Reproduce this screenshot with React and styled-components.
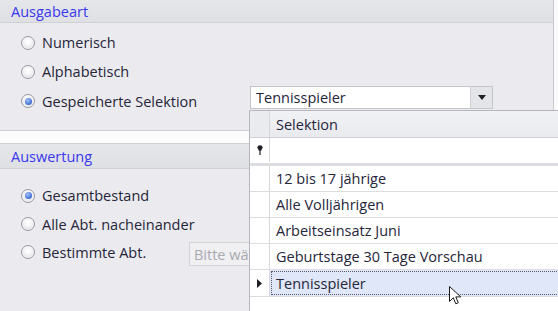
import React from 'react';
import styled, { createGlobalStyle } from 'styled-components';

const GlobalStyle = createGlobalStyle`
    html, body {
        margin: 0;
        padding: 0;
        background: #fafafb;
    }
    body {
        font-family: 'Open Sans', 'Noto Sans', sans-serif;
        font-size: 14px;
        color: #26263a;
    }
`;

const Screen = styled.div`
    position: relative;
    width: 558px;
    height: 311px;
    overflow: hidden;
    background: #fafafb;
    display: flex;
    flex-direction: column;
`;

const Group = styled.div`
    width: 554px;
    height: ${props => props.height}px;
    background: #ebebef;
    border-right: 1px solid #c9c9cd;
    box-sizing: border-box;
    display: flex;
    flex-direction: column;
    border-top: ${props => props.topLine ? '1px solid #cfd0d4' : 'none'};
    border-bottom: ${props => props.bottomLine ? '1px solid #cfd0d4' : 'none'};
`;

const GroupHeader = styled.div`
    height: ${props => props.height}px;
    flex-shrink: 0;
    display: flex;
    align-items: center;
    padding-left: 11px;
    background: linear-gradient(#e5e6ea, #dfe0e4);
    border-bottom: 1px solid #d0d1d5;
    box-sizing: border-box;
    color: #3a38ee;
    font-size: 14.5px;
`;

const GroupBody = styled.div`
    display: flex;
    flex-direction: column;
    padding: ${props => props.pad};
`;

const Row = styled.div`
    height: ${props => props.height}px;
    display: flex;
    align-items: center;
`;

const Option = styled.label`
    width: ${props => props.width}px;
    display: flex;
    align-items: center;
    gap: 7px;
    margin-left: 21px;
    font-size: 14.5px;
    color: #26263a;
    white-space: nowrap;
`;

const RadioCircle = styled.span`
    width: 14px;
    height: 14px;
    border-radius: 50%;
    box-sizing: border-box;
    border: 1px solid #979aa3;
    background: radial-gradient(circle at 50% 40%, #ffffff 0%, #f4f4f6 40%, #cfd1d7 100%);
    box-shadow: inset 0 0 0 1px rgba(255, 255, 255, 0.6);
    display: flex;
    align-items: center;
    justify-content: center;
    flex-shrink: 0;

    &::after {
        content: '';
        display: ${props => props.checked ? 'block' : 'none'};
        width: 7px;
        height: 7px;
        border-radius: 50%;
        background: radial-gradient(circle at 40% 35%, #a6c4f6 0%, #4676d6 60%, #2b54ad 100%);
    }
`;

const Combo = styled.div`
    align-self: flex-start;
    width: 243px;
    height: 23px;
    box-sizing: border-box;
    border: 1px solid #c4c5c9;
    background: #ffffff;
    display: flex;
    align-items: stretch;
`;

const ComboText = styled.div`
    flex: 1;
    padding-left: 5px;
    display: flex;
    align-items: center;
    font-size: 14.5px;
    color: #26263a;
`;

const ComboButton = styled.div`
    width: 21px;
    background: #e4e5e9;
    border-left: 1px solid #d2d3d7;
    display: flex;
    align-items: center;
    justify-content: center;
`;

const Placeholder = styled.div`
    align-self: flex-end;
    width: 90px;
    height: 24px;
    box-sizing: border-box;
    border: 1px solid #d3d4d8;
    background: #f0f0f3;
    padding-left: 4px;
    display: flex;
    align-items: center;
    color: #a9a9b0;
    font-size: 14.5px;
    white-space: nowrap;
    overflow: hidden;
`;

const Gap = styled.div`
    height: 12px;
    background: #fcfcfd;
`;

const Popup = styled.div`
    position: absolute;
    left: 249px;
    top: 110px;
    width: 330px;
    height: 220px;
    background: #ffffff;
    border-left: 1px solid #b6b7bc;
    border-top: 1px solid #b6b7bc;
    display: flex;
    flex-direction: column;
`;

const GridRow = styled.div`
    height: ${props => props.height}px;
    flex-shrink: 0;
    display: flex;
    box-sizing: border-box;
    border-bottom: 1px solid ${props => props.line || '#dcdde1'};
`;

const Indicator = styled.div`
    width: 20px;
    flex-shrink: 0;
    box-sizing: border-box;
    border-right: 1px solid #d6d7db;
    background: ${props => props.header ? '#eaebef' : '#ffffff'};
    display: flex;
    align-items: center;
    justify-content: center;
`;

const Cell = styled.div`
    flex: 1;
    display: flex;
    align-items: center;
    padding-left: 6px;
    font-size: 14.5px;
    color: #26263a;
    white-space: nowrap;
    background: ${props => props.header ? 'linear-gradient(#f1f2f5, #e9eaee)' : props.selected ? '#dfe7f8' : '#ffffff'};
    outline: ${props => props.selected ? '1px dotted #5a5a66' : 'none'};
    outline-offset: -2px;
`;

const Separator = styled.div`
    height: 3px;
    flex-shrink: 0;
    background: #dcdde1;
`;

const Cursor = styled.svg`
    position: absolute;
    left: 449px;
    top: 286px;
`;

const DownArrow = () => (
    <svg width="8" height="5" viewBox="0 0 8 5">
        <path d="M0 0 H8 L4 5 Z" fill="#1e1e24" />
    </svg>
);

const Pin = () => (
    <svg width="6" height="10" viewBox="0 0 6 10">
        <ellipse cx="3" cy="2.5" rx="2.6" ry="2.2" fill="#1e1e24" />
        <rect x="1.5" y="4" width="3" height="1.5" fill="#1e1e24" />
        <rect x="2.4" y="5" width="1.2" height="5" fill="#1e1e24" />
    </svg>
);

const RowArrow = () => (
    <svg width="5" height="9" viewBox="0 0 5 9">
        <path d="M0 0 L5 4.5 L0 9 Z" fill="#1e1e24" />
    </svg>
);

const Radio = ({ checked, width, children }) => (
    <Option width={width}>
        <RadioCircle checked={checked} />
        {children}
    </Option>
);

const selections = [
    '12 bis 17 jährige',
    'Alle Volljährigen',
    'Arbeitseinsatz Juni',
    'Geburtstage 30 Tage Vorschau',
];

export default function App() {
    return (
        <Screen>
            <GlobalStyle />
            <Group height={131} bottomLine>
                <GroupHeader height={23}>Ausgabeart</GroupHeader>
                <GroupBody pad="5px 0 0 0">
                    <Row height={29}><Radio width={229}>Numerisch</Radio></Row>
                    <Row height={29}><Radio width={229}>Alphabetisch</Radio></Row>
                    <Row height={30}>
                        <Radio width={229} checked>Gespeicherte Selektion</Radio>
                        <Combo>
                            <ComboText>Tennisspieler</ComboText>
                            <ComboButton><DownArrow /></ComboButton>
                        </Combo>
                    </Row>
                </GroupBody>
            </Group>
            <Gap />
            <Group height={168} topLine>
                <GroupHeader height={25}>Auswertung</GroupHeader>
                <GroupBody pad="12px 0 0 0">
                    <Row height={29}><Radio width={168} checked>Gesamtbestand</Radio></Row>
                    <Row height={28}><Radio width={168}>Alle Abt. nacheinander</Radio></Row>
                    <Row height={28}>
                        <Radio width={168}>Bestimmte Abt.</Radio>
                        <Placeholder>Bitte wählen</Placeholder>
                    </Row>
                </GroupBody>
            </Group>

            <Popup>
                <GridRow height={27} line="#d0d1d5">
                    <Indicator header />
                    <Cell header>Selektion</Cell>
                </GridRow>
                <GridRow height={25} line="transparent">
                    <Indicator><Pin /></Indicator>
                    <Cell />
                </GridRow>
                <Separator />
                {selections.map(name => (
                    <GridRow key={name} height={26}>
                        <Indicator />
                        <Cell>{name}</Cell>
                    </GridRow>
                ))}
                <GridRow height={27}>
                    <Indicator><RowArrow /></Indicator>
                    <Cell selected>Tennisspieler</Cell>
                </GridRow>
            </Popup>

            <Cursor width="14" height="20" viewBox="0 0 14 20">
                <path d="M0.5 0.5 L0.5 15.5 L4.3 11.8 L6.8 17.8 L9.3 16.8 L6.8 10.9 L11.8 10.9 Z" fill="#ffffff" stroke="#1a1a1a" strokeWidth="1" strokeLinejoin="miter" />
            </Cursor>
        </Screen>
    );
}
